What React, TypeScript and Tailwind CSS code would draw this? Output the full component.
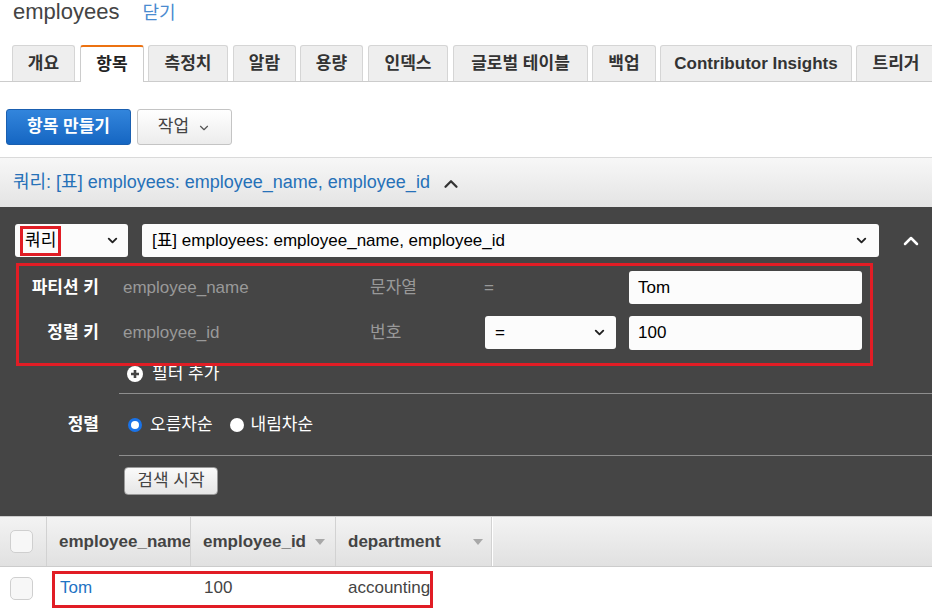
import { ChevronDown, ChevronUp } from "lucide-react";

// [라벨, 너비, 왼쪽 간격]
const tabs: [string, string, string][] = [
  ["개요", "w-[63px]", "ml-0"],
  ["항목", "w-[64px]", "ml-[5px]"],
  ["측정치", "w-[80px]", "ml-[4px]"],
  ["알람", "w-[63px]", "ml-[5px]"],
  ["용량", "w-[63px]", "ml-[4px]"],
  ["인덱스", "w-[80px]", "ml-[5px]"],
  ["글로벌 테이블", "w-[135px]", "ml-[5px]"],
  ["백업", "w-[64px]", "ml-[4px]"],
  ["Contributor Insights", "w-[192px]", "ml-[4px]"],
  ["트리거", "w-[80px]", "ml-[4px]"],
];

function SortCaret() {
  return (
    <svg width="10" height="6" viewBox="0 0 10 6" className="shrink-0">
      <path d="M0 0 L10 0 L5 6 Z" fill="#a8a8a8" />
    </svg>
  );
}

function Checkbox() {
  return <div className="w-[23px] h-[23px] rounded-[5px] border border-[#cfcfcf] bg-[#f7f7f7]" />;
}

export default function App() {
  return (
    <div className="w-[932px] h-[609px] overflow-hidden bg-white font-['Liberation_Sans','Noto_Sans_CJK_KR',sans-serif] text-[17px] text-[#444]">
      {/* 제목 */}
      <div className="flex items-baseline h-[45px] pl-[13px] pt-[1px] leading-none">
        <span className="text-[22px] text-[#444]">employees</span>
        <a className="ml-[23px] text-[18px] text-[#4a8bd0]">닫기</a>
      </div>

      {/* 탭 */}
      <div className="flex pl-[12px] h-[37px] border-b border-[#cccccc]">
        {tabs.map(([t, w, ml]) =>
          t === "항목" ? (
            <div
              key={t}
              className={`${w} ${ml} h-[37px] flex items-center justify-center shrink-0 bg-white border border-[#cccccc] border-b-0 border-t-2 border-t-[#ec7211] rounded-t-[3px] font-bold text-[#222] whitespace-nowrap`}
            >
              {t}
            </div>
          ) : (
            <div
              key={t}
              className={`${w} ${ml} h-[36px] flex items-center justify-center shrink-0 bg-[#eeeeee] border border-[#d5d5d5] border-b-0 rounded-t-[3px] font-bold text-[#333] whitespace-nowrap`}
            >
              {t}
            </div>
          )
        )}
      </div>

      {/* 버튼 */}
      <div className="flex gap-[6px] pl-[6px] mt-[27px]">
        <button className="w-[125px] h-[36px] rounded-[3px] border border-[#1a5fb0] bg-gradient-to-b from-[#3285dc] to-[#1566c2] text-white font-bold">
          항목 만들기
        </button>
        <button className="w-[95px] h-[36px] rounded-[3px] border border-[#c4c4c4] bg-gradient-to-b from-white to-[#ececec] text-[#444] flex items-center justify-center gap-[8px]">
          작업
          <ChevronDown size={14} strokeWidth={2} className="text-[#555] mt-[2px]" />
        </button>
      </div>

      {/* 쿼리 헤더 */}
      <div className="mt-[12px] h-[50px] border-t border-[#dadada] bg-gradient-to-b from-[#f7f7f7] to-[#e4e4e4] flex items-center pl-[13px]">
        <span className="text-[18px] text-[#2671b8]">쿼리: [표] employees: employee_name, employee_id</span>
        <ChevronUp size={22} strokeWidth={2.5} className="ml-[10px] text-[#333] mt-[2px]" />
      </div>

      {/* 쿼리 패널 */}
      <div className="h-[309px] bg-[#454545] pt-[17px]">
        <div className="flex items-center pl-[15px]">
          <div className="w-[113px] h-[33px] rounded-[3px] bg-[#fcfcfc] flex items-center pl-[5px] pr-[8px] justify-between">
            <span className="h-[30px] border-[3px] border-[#e11d25] px-[2px] flex items-center text-black">쿼리</span>
            <ChevronDown size={15} strokeWidth={3} className="text-[#222]" />
          </div>
          <div className="ml-[14px] w-[737px] h-[33px] rounded-[3px] bg-[#fcfcfc] flex items-center justify-between pl-[10px] pr-[10px] text-black">
            <span>[표] employees: employee_name, employee_id</span>
            <ChevronDown size={15} strokeWidth={3} className="text-[#222]" />
          </div>
          <ChevronUp size={24} strokeWidth={2.5} className="ml-[20px] text-white" />
        </div>

        <div className="relative z-10 mt-[6px] ml-[16px] w-[857px] h-[103px] border-[3px] border-[#e11d25] pt-[5px] flex flex-col gap-[12px]">
          <div className="flex items-center h-[33px]">
            <div className="w-[80px] text-right font-bold text-white whitespace-nowrap">파티션 키</div>
            <div className="ml-[24px] w-[247px] text-[#999]">employee_name</div>
            <div className="w-[114px] text-[#999]">문자열</div>
            <div className="w-[132px] text-[#999]">=</div>
            <div className="ml-[13px] w-[233px] h-[33px] rounded-[3px] bg-[#fcfcfc] flex items-center pl-[9px] text-black">Tom</div>
          </div>
          <div className="flex items-center h-[33px]">
            <div className="w-[80px] text-right font-bold text-white whitespace-nowrap">정렬 키</div>
            <div className="ml-[24px] w-[247px] text-[#999]">employee_id</div>
            <div className="w-[114px] text-[#999]">번호</div>
            <div className="ml-[1px] w-[131px] h-[33px] rounded-[3px] bg-[#fcfcfc] flex items-center justify-between pl-[10px] pr-[9px] text-black">
              <span>=</span>
              <ChevronDown size={15} strokeWidth={3} className="text-[#222]" />
            </div>
            <div className="ml-[13px] w-[233px] h-[34px] rounded-[3px] bg-[#fcfcfc] flex items-center pl-[9px] text-black">100</div>
          </div>
        </div>

        <div className="-mt-[3px] h-[22px] flex items-center pl-[127px] text-white">
          <svg width="16" height="16" viewBox="0 0 16 16">
            <circle cx="8" cy="8" r="8" fill="#fff" />
            <path d="M8 4 V12 M4 8 H12" stroke="#454545" strokeWidth="2.6" />
          </svg>
          <span className="ml-[9px]">필터 추가</span>
        </div>

        <div className="flex mt-[8px]">
          <div className="w-[119px] pr-[20px] flex items-center justify-end font-bold text-white">정렬</div>
          <div className="flex-1 h-[63px] border-y border-[#8e8e8e] flex items-center pl-[9px] text-white">
            <span className="w-[14px] h-[14px] rounded-full border-[3px] border-[#1a73e8] bg-white" />
            <span className="ml-[8px]">오름차순</span>
            <span className="ml-[17px] w-[14px] h-[14px] rounded-full bg-white" />
            <span className="ml-[7px]">내림차순</span>
          </div>
        </div>

        <button className="ml-[124px] mt-[11px] w-[94px] h-[28px] rounded-[4px] border border-[#9a9a9a] bg-gradient-to-b from-[#fafafa] to-[#e6e6e6] text-[#444]">
          검색 시작
        </button>
      </div>

      {/* 결과 테이블 */}
      <div className="h-[51px] flex border-t border-[#8a8a8a] border-b border-[#cccccc] bg-gradient-to-b from-[#f3f3f3] to-[#e1e1e1] font-bold text-[#444]">
        <div className="w-[47px] flex items-center pl-[10px] border-r border-[#d2d2d2]">
          <Checkbox />
        </div>
        <div className="w-[144px] flex items-center pl-[12px] border-r border-[#d2d2d2] overflow-hidden whitespace-nowrap">employee_name</div>
        <div className="w-[145px] flex items-center justify-between pl-[12px] pr-[10px] border-r border-[#d2d2d2]">
          <span>employee_id</span>
          <SortCaret />
        </div>
        <div className="w-[156px] flex items-center justify-between pl-[12px] pr-[8px] border-r border-[#d2d2d2]">
          <span>department</span>
          <SortCaret />
        </div>
        <div className="flex-1 border-l border-white" />
      </div>
      <div className="relative h-[42px] flex items-center">
        <div className="w-[47px] pl-[10px]">
          <Checkbox />
        </div>
        <div className="w-[144px] pl-[13px] text-[#1f74c4]">Tom</div>
        <div className="w-[145px] pl-[13px] text-[#444]">100</div>
        <div className="w-[156px] pl-[12px] text-[#444]">accounting</div>
        <div className="absolute left-[52px] top-[4px] w-[381px] h-[37px] border-[3px] border-[#e11d25]" />
      </div>
    </div>
  );
}
